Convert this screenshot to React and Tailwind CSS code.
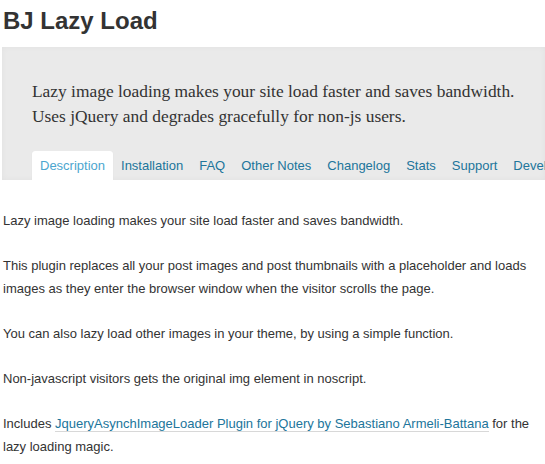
export default function App() {
  const tabs = ["Installation", "FAQ", "Other Notes", "Changelog", "Stats", "Support", "Developers"];
  return (
    <div className="w-[545px] h-[464px] overflow-hidden bg-white text-[#333]" style={{ fontFamily: '"Liberation Sans", Arial, sans-serif' }}>
      <h1 className="mt-[9px] ml-[3px] text-[24px] leading-[24px] font-bold text-[#333]">BJ Lazy Load</h1>
      <div className="mt-[14px] ml-[2px] bg-[#eaeaea] pt-[32px] shadow-[inset_0_0_6px_rgba(0,0,0,0.04)]">
        <div className="pl-[30px] pr-2 text-[17.4px] leading-[25px] text-[#333]" style={{ fontFamily: '"Liberation Serif", Georgia, serif' }}>
          <p>Lazy image loading makes your site load faster and saves bandwidth.</p>
          <p>Uses jQuery and degrades gracefully for non-js users.</p>
        </div>
        <div className="mt-[22px] pl-[30px] flex whitespace-nowrap overflow-hidden text-[13px]">
          <div className="h-[29px] px-2 flex items-center bg-white rounded-t-[3px] text-[#4ca6cf] shadow-[0_0_1px_rgba(0,0,0,0.08)]">Description</div>
          {tabs.map((t) => (
            <div key={t} className="h-[29px] px-2 flex items-center text-[#21759b]">{t}</div>
          ))}
        </div>
      </div>
      <div className="pl-[3px] pr-[2px] pt-[29px] text-[13px] leading-[23px] text-[#333]">
        <p className="mb-[22px]">Lazy image loading makes your site load faster and saves bandwidth.</p>
        <p className="mb-[22px]">This plugin replaces all your post images and post thumbnails with a placeholder and loads images as they enter the browser window when the visitor scrolls the page.</p>
        <p className="mb-[22px]">You can also lazy load other images in your theme, by using a simple function.</p>
        <p className="mb-[22px]">Non-javascript visitors gets the original img element in noscript.</p>
        <p className="mb-[22px]">
          Includes{" "}
          <a href="#" className="text-[#21759b] border-b border-[#d8d8d8]">JqueryAsynchImageLoader Plugin for jQuery by Sebastiano Armeli-Battana</a>{" "}
          for the lazy loading magic.
        </p>
      </div>
    </div>
  );
}
